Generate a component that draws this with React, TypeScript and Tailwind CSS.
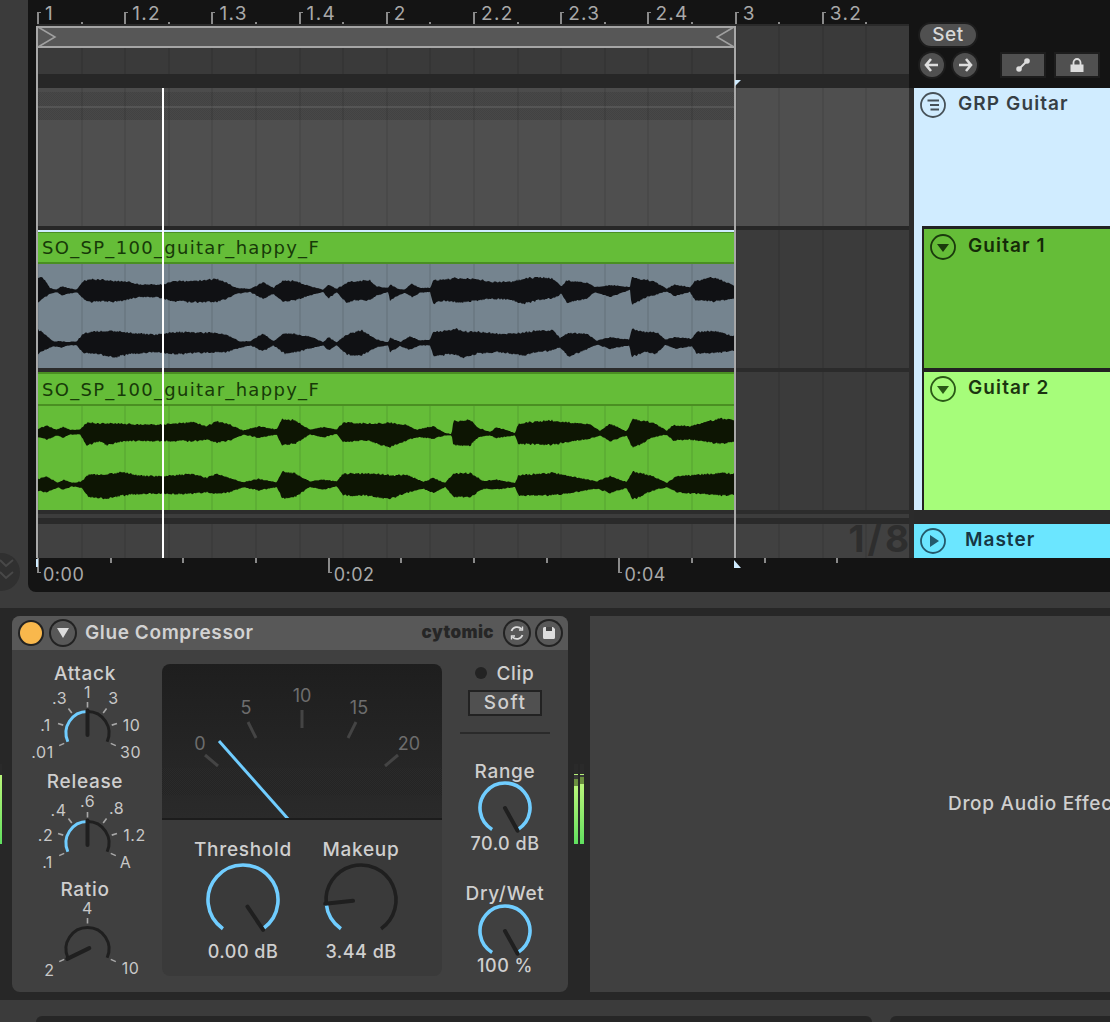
import React from 'react'

type P = [number, number, number]

// envelope points read off the reference: [x, top, bottom] in zoomed pixels
const t1c1a: P[] = [[115,142,215],[130,145,205],[150,175,190],[170,180,185],[185,170,195],[205,175,190],[230,180,185],[250,155,205],[270,150,215],[300,150,212],[340,155,215],[380,155,208],[420,165,200],[470,165,200],[490,165,205],[520,155,212],[580,155,215],[650,148,215],[680,160,205],[710,175,190],[750,178,185],[790,158,205],[820,175,190],[850,152,215],[890,155,208],[930,170,195],[970,180,185],[985,165,205],[1010,178,185],[1040,160,218],[1060,155,210],[1110,152,210],[1130,170,195],[1165,175,185]]
const t1c1b: P[] = [[0,90,135],[25,103,120],[45,105,112],[65,87,125],[90,100,112],[120,100,110],[130,78,145],[160,75,135],[200,70,142],[260,73,135],[300,82,130],[360,82,132],[400,72,145],[450,68,133],[490,72,128],[515,95,115],[530,77,142],[590,85,130],[615,97,110],[660,92,125],[720,97,103],[725,67,150],[760,75,128],[790,80,120],[830,102,108],[855,90,122],[900,98,110],[915,80,135],[970,68,138],[1032,92,130]]
const t1c2a: P[] = [[115,300,372],[130,310,360],[160,335,348],[185,335,352],[205,338,345],[230,335,345],[250,312,368],[290,305,370],[345,305,382],[380,308,372],[420,312,368],[470,315,365],[490,312,368],[530,308,370],[580,308,368],[650,310,365],[680,315,365],[720,335,352],[750,335,345],[790,312,362],[820,335,345],[855,310,370],[890,315,365],[930,320,355],[970,338,345],[985,322,360],[1010,338,345],[1040,315,372],[1085,302,375],[1130,330,350],[1165,338,345]]
const t1c2b: P[] = [[0,248,290],[30,262,272],[60,245,283],[90,258,270],[120,255,270],[130,232,300],[170,228,298],[200,222,298],[215,230,308],[260,232,295],[330,238,290],[400,235,300],[440,228,290],[490,228,285],[510,250,275],[535,235,303],[590,237,282],[620,258,268],[660,248,280],[718,255,270],[725,222,305],[760,232,290],[800,232,295],[825,255,268],[855,248,280],[905,252,272],[920,232,295],[970,228,293],[1032,245,285]]
const t2c1a: P[] = [[115,597,620],[140,588,628],[170,600,615],[190,592,622],[210,600,612],[240,600,612],[260,580,645],[300,582,632],[320,582,645],[370,582,632],[420,585,632],[490,585,632],[580,578,632],[620,590,628],[650,575,637],[690,585,630],[730,603,613],[775,590,622],[830,600,612],[845,568,645],[885,572,640],[930,600,612],[970,592,622],[1010,600,610],[1030,578,635],[1100,582,630],[1165,580,650]]
const t2c1b: P[] = [[0,505,575],[50,512,555],[80,525,545],[130,515,550],[165,535,540],[185,538,540],[190,500,570],[240,495,570],[265,520,545],[300,532,540],[320,518,548],[375,535,540],[385,507,565],[480,497,568],[600,510,550],[630,528,540],[660,508,558],[710,530,540],[728,492,578],[790,505,545],[830,528,538],[850,512,555],[900,515,553],[990,492,565],[1032,495,560]]
const t2c2a: P[] = [[115,748,782],[140,740,785],[175,760,772],[190,750,778],[215,760,768],[245,755,772],[265,735,800],[320,735,805],[370,727,795],[420,738,790],[490,740,790],[580,733,790],[620,745,785],[650,732,790],[690,745,785],[730,758,770],[775,748,780],[830,758,770],[848,725,805],[885,732,800],[930,755,770],[970,750,778],[1010,755,768],[1030,732,795],[1100,732,795],[1165,735,805]]
const t2c2b: P[] = [[0,662,730],[50,660,712],[100,682,700],[130,670,712],[165,685,695],[190,657,725],[240,655,725],[280,680,700],[320,675,702],[375,685,695],[385,662,720],[490,655,720],[620,680,700],[660,665,712],[710,682,698],[728,650,733],[790,665,705],[830,685,695],[860,665,710],[920,660,715],[1000,655,720],[1032,658,717]]

const join = (a: P[], b: P[]): P[] => [
  ...a.map(([u, t, d]): P => [u / 3, 230 + t / 3, 230 + d / 3]),
  ...b.map(([u, t, d]): P => [390 + u / 3, 255 + t / 3, 255 + d / 3]),
]

function wavePath(pts: P[], seed: number) {
  const top: string[] = []
  const bottom: string[] = []
  let i = 0
  const noise = (x: number, s: number) => {
    const r = Math.sin(x * 12.9898 + s) * 43758.5453
    return r - Math.floor(r) - 0.5
  }
  for (let x = 38; x <= 735; x++) {
    while (i < pts.length - 2 && pts[i + 1][0] < x) i++
    const [x0, t0, b0] = pts[i]
    const [x1, t1, b1] = pts[i + 1]
    const k = Math.max(0, Math.min(1, (x - x0) / (x1 - x0)))
    const thick = (b0 + (b1 - b0) * k - (t0 + (t1 - t0) * k)) / 22
    const amp = 0.5 + Math.min(1, thick) * 1.5
    top.push(`${x},${(t0 + (t1 - t0) * k - 0.4 - noise(x, seed) * amp).toFixed(1)}`)
    bottom.unshift(`${x},${(b0 + (b1 - b0) * k + 0.4 + noise(x, seed + 5) * amp).toFixed(1)}`)
  }
  return `M${top.join(' L')} L${bottom.join(' L')} Z`
}

function Grid() {
  return (
    <div className="absolute top-0 bottom-0 left-0 w-[872px] flex">
      {Array.from({ length: 20 }).map((_, i) => (
        <div key={i} className="flex-1 border-l-2 border-black/[0.07]" />
      ))}
    </div>
  )
}

function BarRuler() {
  const labels = ['1', '1.2', '1.3', '1.4', '2', '2.2', '2.3', '2.4', '3', '3.2']
  return (
    <div className="flex h-6">
      {labels.map((l) => (
        <div key={l} className="relative flex-1 flex items-start">
          <div className="mt-3 h-3 w-[4px] border-l-2 border-t border-[#8a8a8a]" />
          <span className="ml-[4px] mt-[3px] text-[19px] leading-[22px] tracking-[1.3px] text-[#a9a9a9]">{l}</span>
          <div className="absolute bottom-0 left-1/2 h-[2px] w-[2px] bg-[#8a8a8a]" />
        </div>
      ))}
    </div>
  )
}

function TimeRuler() {
  const labels: Record<number, string> = { 0: '0:00', 4: '0:02', 8: '0:04' }
  return (
    <div className="flex h-[34px]">
      {Array.from({ length: 12 }).map((_, i) => (
        <div key={i} className="flex-1 flex items-start">
          {labels[i] ? (
            <>
              <div className="h-[15px] w-[4px] border-l-2 border-b border-[#8a8a8a]" />
              <span className="ml-[2px] mt-[4px] text-[18px] leading-[26px] tracking-[0.5px] text-[#a9a9a9]">{labels[i]}</span>
            </>
          ) : (
            <div className="h-[5px] w-[2px] bg-[#8a8a8a]" />
          )}
        </div>
      ))}
    </div>
  )
}

function ClipRow({ first, waveBg, fill, c1, c2, y }: { first?: boolean; waveBg: string; fill: string; c1: P[]; c2: P[]; y: number }) {
  return (
    <div className="relative h-[138px] bg-[#3b3b3b]">
      <Grid />
      <div className="relative w-[697px] h-full flex flex-col overflow-hidden">
        {first && <div className="h-[2px] bg-[#d0ecff]" />}
        <div className={`${first ? 'h-[32px] border-t' : 'h-[34px] border-t-2'} border-b-2 border-[#4a8f22] bg-[#65bd38] pl-[5px] flex items-center`}>
          <span className="[font-family:'DejaVu_Sans',sans-serif] text-[18px] tracking-[1.3px] text-[#173a08]">SO_SP_100_guitar_happy_F</span>
        </div>
        <div className={`relative h-[104px] ${waveBg}`}>
          <Grid />
          <svg width="698" height="104" viewBox={`37 ${y} 698 104`} className="absolute inset-0">
            <path d={wavePath(c1, 1)} fill={fill} />
            <path d={wavePath(c2, 2)} fill={fill} />
          </svg>
        </div>
      </div>
    </div>
  )
}

function Timeline() {
  return (
    <div className="relative w-[872px] shrink-0 flex flex-col">
      <BarRuler />
      <div className="h-[2px] bg-[#2a2a2a]" />
      <div className="relative h-[48px] bg-[#3a3a3a]">
        <Grid />
        <div className="relative w-[697px] h-[22px] bg-[#575757] border-y-2 border-[#a5a5a5]" />
      </div>
      <div className="h-[14px] bg-[#272727]" />
      <div className="relative h-[138px] bg-[#4f4f4f] flex flex-col">
        <div className="w-[697px] h-[4px] bg-[#4c4c4c]" />
        <div className="w-[697px] h-[14px] bg-[repeating-conic-gradient(#424242_0_25%,#484848_0_50%)] bg-[length:2px_2px]" />
        <div className="w-[697px] h-[2px] bg-[#555]" />
        <div className="w-[697px] h-[12px] bg-[repeating-conic-gradient(#424242_0_25%,#484848_0_50%)] bg-[length:2px_2px]" />
        <Grid />
      </div>
      <div className="h-[4px] bg-[#272727]" />
      <ClipRow first waveBg="bg-[#75848f]" fill="#101114" c1={join(t1c1a, t1c1b)} c2={join(t1c2a, t1c2b)} y={264} />
      <div className="h-[4px] bg-[#2b2b2b]" />
      <ClipRow waveBg="bg-[#65bd38]" fill="#0d1503" c1={join(t2c1a, t2c1b)} c2={join(t2c2a, t2c2b)} y={406} />
      <div className="h-[4px] bg-[#2c2c2c]" />
      <div className="h-[4px] bg-[#3c3c3c]" />
      <div className="h-[6px] bg-[#2a2a2a]" />
      <div className="relative h-[34px] bg-[#414141]">
        <Grid />
        <span className="absolute right-[-3px] top-[-5px] text-[37px] leading-[40px] tracking-[3px] font-bold text-[#2e2e2e]">1/8</span>
      </div>
      <TimeRuler />

      {/* loop brace, playhead and insert markers lie over the lanes */}
      <div className="absolute left-[-1px] top-[26px] h-[532px] w-[2px] bg-[#a8a8a8]" />
      <div className="absolute left-[697px] top-[26px] h-[532px] w-[2px] bg-[#a8a8a8]" />
      <div className="absolute left-[125px] top-[88px] h-[470px] w-[2px] bg-white" />
      <svg width="20" height="22" className="absolute left-0 top-[26px]">
        <path d="M1 1 L18 11 L1 21" fill="none" stroke="#a0a0a0" strokeWidth="1.5" />
      </svg>
      <svg width="20" height="22" className="absolute left-[678px] top-[26px]">
        <path d="M19 1 L2 11 L19 21" fill="none" stroke="#a0a0a0" strokeWidth="1.5" />
      </svg>
      <svg width="7" height="7" className="absolute left-[698px] top-[80px]">
        <path d="M0 0 H6 L0 6 Z" fill="#d0ecff" />
      </svg>
      <svg width="8" height="9" className="absolute left-[697px] top-[560px]">
        <path d="M0 0 L7 8 H0 Z" fill="#d0ecff" />
      </svg>
      <div className="absolute left-[-1px] top-[559px] h-[8px] w-[2px] bg-[#d0ecff]" />
    </div>
  )
}

function CircleIcon({ color, children }: { color: string; children: React.ReactNode }) {
  return (
    <svg width="26" height="26" viewBox="0 0 26 26" className="shrink-0">
      <circle cx="13" cy="13" r="12" fill="none" stroke={color} strokeWidth="1.8" />
      {children}
    </svg>
  )
}

function Transport() {
  const round = 'w-[24px] h-[24px] rounded-full bg-[#505050] ring-2 ring-[#1d1d1d] flex items-center justify-center'
  const square = 'w-[42px] h-[22px] bg-[#505050] ring-2 ring-[#1d1d1d] flex items-center justify-center'
  return (
    <div className="h-[88px] pl-[6px] flex flex-col">
      <div className="mt-[24px] w-[56px] h-[22px] rounded-full bg-[#505050] ring-2 ring-[#1d1d1d] flex items-center justify-center text-[19px] tracking-[0.6px] font-medium text-[#d8d8d8]">Set</div>
      <div className="mt-[7px] flex items-center">
        <div className={round}>
          <svg width="16" height="14" viewBox="0 0 16 14"><path d="M7 1 L2 7 L7 13 M2 7 H14" fill="none" stroke="#ddd" strokeWidth="2.6" /></svg>
        </div>
        <div className={`${round} ml-[9px]`}>
          <svg width="16" height="14" viewBox="0 0 16 14"><path d="M9 1 L14 7 L9 13 M14 7 H2" fill="none" stroke="#ddd" strokeWidth="2.6" /></svg>
        </div>
        <div className={`${square} ml-[25px]`}>
          <svg width="16" height="16" viewBox="0 0 16 16">
            <path d="M4 12 L12 4" stroke="#ddd" strokeWidth="2" />
            <circle cx="12" cy="4" r="2.8" fill="#ddd" />
            <circle cx="4" cy="12" r="2.8" fill="#ddd" />
          </svg>
        </div>
        <div className={`${square} ml-[12px]`}>
          <svg width="16" height="16" viewBox="0 0 16 16">
            <path d="M4.5 8 V5.5 a3.5 3.5 0 0 1 7 0 V8" fill="none" stroke="#ddd" strokeWidth="1.8" />
            <rect x="1.5" y="7.5" width="13" height="7.5" fill="#ddd" />
          </svg>
        </div>
      </div>
    </div>
  )
}

function TrackList() {
  const name = 'ml-[12px] text-[19px] leading-[24px] tracking-[1.1px] font-semibold'
  return (
    <div className="w-[196px] shrink-0 flex flex-col">
      <Transport />
      <div className="h-[422px] bg-[#d0ecff] flex flex-col">
        <div className="h-[138px] pl-[6px] pt-[4px] flex items-start">
          <CircleIcon color="#465158">
            <path d="M7.5 8.5 H19 M10 13 H19 M10.5 17.5 H19" stroke="#465158" strokeWidth="1.8" />
          </CircleIcon>
          <span className={`${name} text-[#363f45]`}>GRP Guitar</span>
        </div>
        <div className="ml-[8px] h-[142px] bg-[#65bd38] border-t-[3px] border-l-2 border-[#222] pl-[6px] pt-[5px] flex items-start">
          <CircleIcon color="#1a3a0c"><path d="M7 10 H19 L13 18 Z" fill="#1a3a0c" /></CircleIcon>
          <span className={`${name} text-[#142a08]`}>Guitar 1</span>
        </div>
        <div className="ml-[8px] h-[142px] bg-[#a6fd7a] border-t-4 border-l-2 border-[#222] pl-[6px] pt-[4px] flex items-start">
          <CircleIcon color="#2a5a16"><path d="M7 10 H19 L13 18 Z" fill="#2a5a16" /></CircleIcon>
          <span className={`${name} text-[#1b3410]`}>Guitar 2</span>
        </div>
      </div>
      <div className="h-[14px] bg-[#2a2a2a]" />
      <div className="h-[34px] bg-[#6be6ff] pl-[6px] flex items-center">
        <CircleIcon color="#24596b"><path d="M10 7 L19 13 L10 19 Z" fill="#24596b" /></CircleIcon>
        <span className="ml-[19px] pb-[2px] text-[19px] tracking-[1px] font-semibold text-[#163644]">Master</span>
      </div>
    </div>
  )
}

const polar = (cx: number, cy: number, r: number, deg: number) => {
  const a = ((deg - 90) * Math.PI) / 180
  return [cx + r * Math.cos(a), cy + r * Math.sin(a)]
}

const arc = (cx: number, cy: number, r: number, from: number, to: number) => {
  const [x0, y0] = polar(cx, cy, r, from)
  const [x1, y1] = polar(cx, cy, r, to)
  return `M${x0} ${y0} A${r} ${r} 0 ${to - from > 180 ? 1 : 0} 1 ${x1} ${y1}`
}

function Knob({ cx, cy, r, sweep, value, pointer, inner = 0, stroke = 3 }: { cx: number; cy: number; r: number; sweep: number; value: number; pointer: number; inner?: number; stroke?: number }) {
  const [px0, py0] = polar(cx, cy, inner, pointer)
  const [px1, py1] = polar(cx, cy, r + 1, pointer)
  return (
    <g fill="none">
      {value < sweep && <path d={arc(cx, cy, r, value, sweep)} stroke="#1f1f1f" strokeWidth={stroke} />}
      {value > -sweep && <path d={arc(cx, cy, r, -sweep, value)} stroke="#70cdff" strokeWidth={stroke} />}
      <path d={`M${px0} ${py0} L${px1} ${py1}`} stroke="#1f1f1f" strokeWidth="4" strokeLinecap="round" />
    </g>
  )
}

const title = 'h-[22px] text-[19px] leading-[24px] tracking-[0.7px] font-medium text-[#cfcfcf]'
const readoutText = 'h-[22px] text-[18px] leading-[24px] tracking-[0.5px] font-medium text-[#cfcfcf]'

function Dial({ name, cy, labels, ticks, value, pointer }: { name: string; cy: number; labels: [string, number, number][]; ticks: number[]; value: number; pointer: number }) {
  const cx = 75.5
  return (
    <div className="h-[108px] flex flex-col items-center">
      <div className={`${title} pr-[4px]`}>{name}</div>
      <svg width="150" height="86" viewBox="0 0 150 86" className="overflow-visible">
        {ticks.map((t) => {
          const [x0, y0] = polar(cx, cy, 25.5, t)
          const [x1, y1] = polar(cx, cy, 31, t)
          return <path key={t} d={`M${x0} ${y0} L${x1} ${y1}`} stroke="#a8a8a8" strokeWidth="1.6" />
        })}
        <Knob cx={cx} cy={cy} r={21.5} sweep={114} value={value} pointer={pointer} inner={-2} />
        {labels.map(([l, dx, dy]) => (
          <text key={l} x={cx + dx} y={cy + dy} textAnchor="middle" dominantBaseline="central" className="fill-[#c8c8c8] text-[16px] tracking-[0.5px]">{l}</text>
        ))}
      </svg>
    </div>
  )
}

function Meter() {
  const ticks = [
    [43, 91, 56, 102],
    [86, 58, 94, 74],
    [140, 46, 140, 64],
    [194, 58, 186, 74],
    [236, 91, 223, 102],
  ]
  const labels: [string, number, number][] = [['0', 38, 79], ['5', 84, 43], ['10', 140, 31], ['15', 197, 43], ['20', 247, 79]]
  return (
    <div className="relative h-[156px] rounded-t-lg bg-gradient-to-b from-[#1e1e1e] to-[#2a2a2a] border-b-2 border-[#1c1c1c] overflow-hidden">
      <div className="mt-[104px] h-[27px] bg-[repeating-conic-gradient(#242424_0_25%,#2a2a2a_0_50%)] bg-[length:2px_2px]" />
      <svg width="280" height="156" viewBox="0 0 280 156" className="absolute inset-0">
        {ticks.map(([a, b, c, d]) => (
          <path key={a} d={`M${a} ${b} L${c} ${d}`} stroke="#444" strokeWidth="3" />
        ))}
        {labels.map(([l, x, y]) => (
          <text key={l} x={x} y={y} textAnchor="middle" dominantBaseline="central" className="fill-[#6d6d6d] text-[18px]">{l}</text>
        ))}
        <path d="M57 77 L127 156" stroke="#70cdff" strokeWidth="3" />
      </svg>
    </div>
  )
}

function BigKnob({ name, readout, value, pointer }: { name: string; readout: string; value: number; pointer: number }) {
  return (
    <div className="w-[118px] flex flex-col items-center">
      <div className={`mt-[18px] ${title}`}>{name}</div>
      <svg width="118" height="80" viewBox="0 0 118 80">
        <Knob cx={59} cy={40} r={35} sweep={145} value={value} pointer={pointer} inner={8} stroke={3.6} />
      </svg>
      <div className={readoutText}>{readout}</div>
    </div>
  )
}

function SmallKnob({ name, readout, cy, gap }: { name: string; readout: string; cy: number; gap: string }) {
  return (
    <div className={`${gap} flex flex-col items-center`}>
      <div className={title}>{name}</div>
      <svg width="70" height="50" viewBox="0 0 70 50" className="overflow-visible">
        <Knob cx={35} cy={cy} r={25} sweep={149} value={149} pointer={151} stroke={3.6} />
      </svg>
      <div className={readoutText}>{readout}</div>
    </div>
  )
}

function GlueCompressor() {
  const attack: [string, number, number][] = [['.3', -28, -35], ['1', 0, -41], ['3', 26, -35], ['.1', -42, -8], ['10', 44, -8], ['.01', -45, 19], ['30', 43, 19]]
  const release: [string, number, number][] = [['.4', -29, -33], ['.6', 0, -42], ['.8', 29, -35], ['.2', -42, -8], ['1.2', 47, -8], ['.1', -40, 19], ['A', 38, 19]]
  const ratio: [string, number, number][] = [['4', 0, -41], ['2', -38, 21], ['10', 43, 19]]
  const scale = [-114, -72, -38, 0, 38, 72, 114]
  const headerBtn = 'w-[24px] h-[24px] rounded-full ring-2 ring-[#222] bg-[#585858] flex items-center justify-center'
  return (
    <div className="w-[556px] h-[376px] shrink-0 rounded-lg bg-[#404040] flex flex-col overflow-hidden">
      <div className="h-[34px] bg-[#585858] flex items-center pl-[8px]">
        <div className="w-[22px] h-[22px] rounded-full bg-[#f9b84c] ring-2 ring-[#222]" />
        <div className={`${headerBtn} ml-[9px]`}>
          <svg width="14" height="12" viewBox="0 0 14 12"><path d="M1 1 H13 L7 11 Z" fill="#dcdcdc" /></svg>
        </div>
        <span className="ml-[10px] text-[19px] tracking-[0.6px] font-semibold text-[#d2d2d2]">Glue Compressor</span>
        <span className="ml-auto text-[17px] font-black tracking-[0.4px] text-[#262626]">cytomic</span>
        <div className={`${headerBtn} ml-[11px]`}>
          <svg width="16" height="16" viewBox="0 0 16 16" fill="none" stroke="#ddd" strokeWidth="1.8">
            <path d="M2.5 6 A6 6 0 0 1 12.5 4" />
            <path d="M13.5 10 A6 6 0 0 1 3.5 12" />
            <path d="M13.5 1.5 V5 H10 M2.5 14.5 V11 H6" strokeWidth="1.4" />
          </svg>
        </div>
        <div className={`${headerBtn} ml-[8px] mr-[7px]`}>
          <svg width="14" height="14" viewBox="0 0 14 14">
            <path d="M1 2.5 A1.5 1.5 0 0 1 2.5 1 H11 L13 3 V11.5 A1.5 1.5 0 0 1 11.5 13 H2.5 A1.5 1.5 0 0 1 1 11.5 Z" fill="#ddd" />
            <rect x="4" y="1" width="6" height="4" fill="#444" />
          </svg>
        </div>
      </div>
      <div className="flex-1 flex">
        <div className="w-[150px] pt-[12px]">
          <Dial name="Attack" cy={49} labels={attack} ticks={scale} value={0} pointer={0} />
          <Dial name="Release" cy={51} labels={release} ticks={scale} value={0} pointer={0} />
          <Dial name="Ratio" cy={49} labels={ratio} ticks={[-114, 0, 114]} value={-114} pointer={-116} />
        </div>
        <div className="w-[280px] mt-[14px] h-[312px] flex flex-col">
          <Meter />
          <div className="flex-1 bg-[#3a3a3a] rounded-b-lg flex pl-[22px]">
            <BigKnob name="Threshold" readout="0.00 dB" value={145} pointer={146} />
            <BigKnob name="Makeup" readout="3.44 dB" value={-96} pointer={-96} />
          </div>
        </div>
        <div className="w-[126px] pt-[12px] flex flex-col items-center">
          <div className="h-[22px] flex items-center gap-[9px]">
            <div className="w-[12px] h-[12px] rounded-full bg-[#232323]" />
            <span className={title}>Clip</span>
          </div>
          <div className="mt-[6px] w-[74px] h-[26px] border-2 border-[#222] bg-[#505050] flex items-center justify-center text-[19px] tracking-[1.5px] font-medium text-[#cfcfcf]">Soft</div>
          <div className="mt-[16px] w-[90px] h-[2px] bg-[#2a2a2a]" />
          <SmallKnob name="Range" readout="70.0 dB" cy={26} gap="mt-[26px]" />
          <SmallKnob name="Dry/Wet" readout="100 %" cy={27} gap="mt-[28px]" />
        </div>
      </div>
    </div>
  )
}

function MiniMeter({ olive }: { olive: string }) {
  return (
    <div className="w-[4px] h-[80px] flex flex-col bg-[#2a2a2a]">
      <div className="h-[10px]" />
      <div className="h-[1px] bg-[#b5f27a]" />
      <div className={`${olive} bg-[#3a3a3a]`} />
      <div className="flex-1 flex flex-col">
        <div className="h-[7px] bg-[#6b8f3f]" />
        <div className="flex-1 bg-gradient-to-b from-[#b8f57a] to-[#5fe05f]" />
      </div>
    </div>
  )
}

export default function App() {
  return (
    <div className="w-[1110px] h-[1022px] overflow-hidden bg-[#3b3b3b] [font-family:Inter,sans-serif]">
      {/* Arrangement */}
      <div className="h-[592px] flex">
        <div className="relative w-[28px] shrink-0">
          <svg width="28" height="40" viewBox="0 0 28 40" className="absolute left-0 bottom-0">
            <circle cx="1" cy="20" r="19" fill="#303030" />
            <path d="M0 8 L6 14 L13 8 M0 20 L6 26 L13 20" fill="none" stroke="#484848" strokeWidth="2" />
          </svg>
        </div>
        <div className="flex-1 bg-[#141414] rounded-bl-lg pl-[9px] flex">
          <Timeline />
          <div className="w-[5px] shrink-0 flex flex-col">
            <div className="h-[88px]" />
            <div className="h-[470px] bg-[#2b2b2b]" />
          </div>
          <TrackList />
        </div>
      </div>

      <div className="h-[16px]" />

      {/* Device chain */}
      <div className="h-[392px] bg-[#272727] py-[8px] flex">
        <div className="w-[12px] shrink-0 pt-[148px]">
          <div className="w-[2px] h-[80px] flex flex-col">
            <div className="h-[11px] bg-[#2a2a2a]" />
            <div className="flex-1 bg-gradient-to-b from-[#b8f57a] to-[#5fe05f]" />
          </div>
        </div>
        <GlueCompressor />
        <div className="w-[22px] shrink-0 pt-[148px] pl-[6px] flex gap-[2px]">
          <MiniMeter olive="h-[4px]" />
          <MiniMeter olive="h-[2px]" />
        </div>
        <div className="flex-1 bg-[#404040] pl-[358px] flex items-center overflow-hidden">
          <span className="whitespace-nowrap text-[19px] tracking-[0.7px] font-medium text-[#cfcfcf]">Drop Audio Effects Here</span>
        </div>
      </div>

      <div className="h-[16px]" />
      <div className="flex gap-[18px] pl-[36px]">
        <div className="w-[836px] h-[6px] rounded-t-lg bg-[#262626]" />
        <div className="flex-1 h-[6px] rounded-tl-lg bg-[#262626]" />
      </div>
    </div>
  )
}
